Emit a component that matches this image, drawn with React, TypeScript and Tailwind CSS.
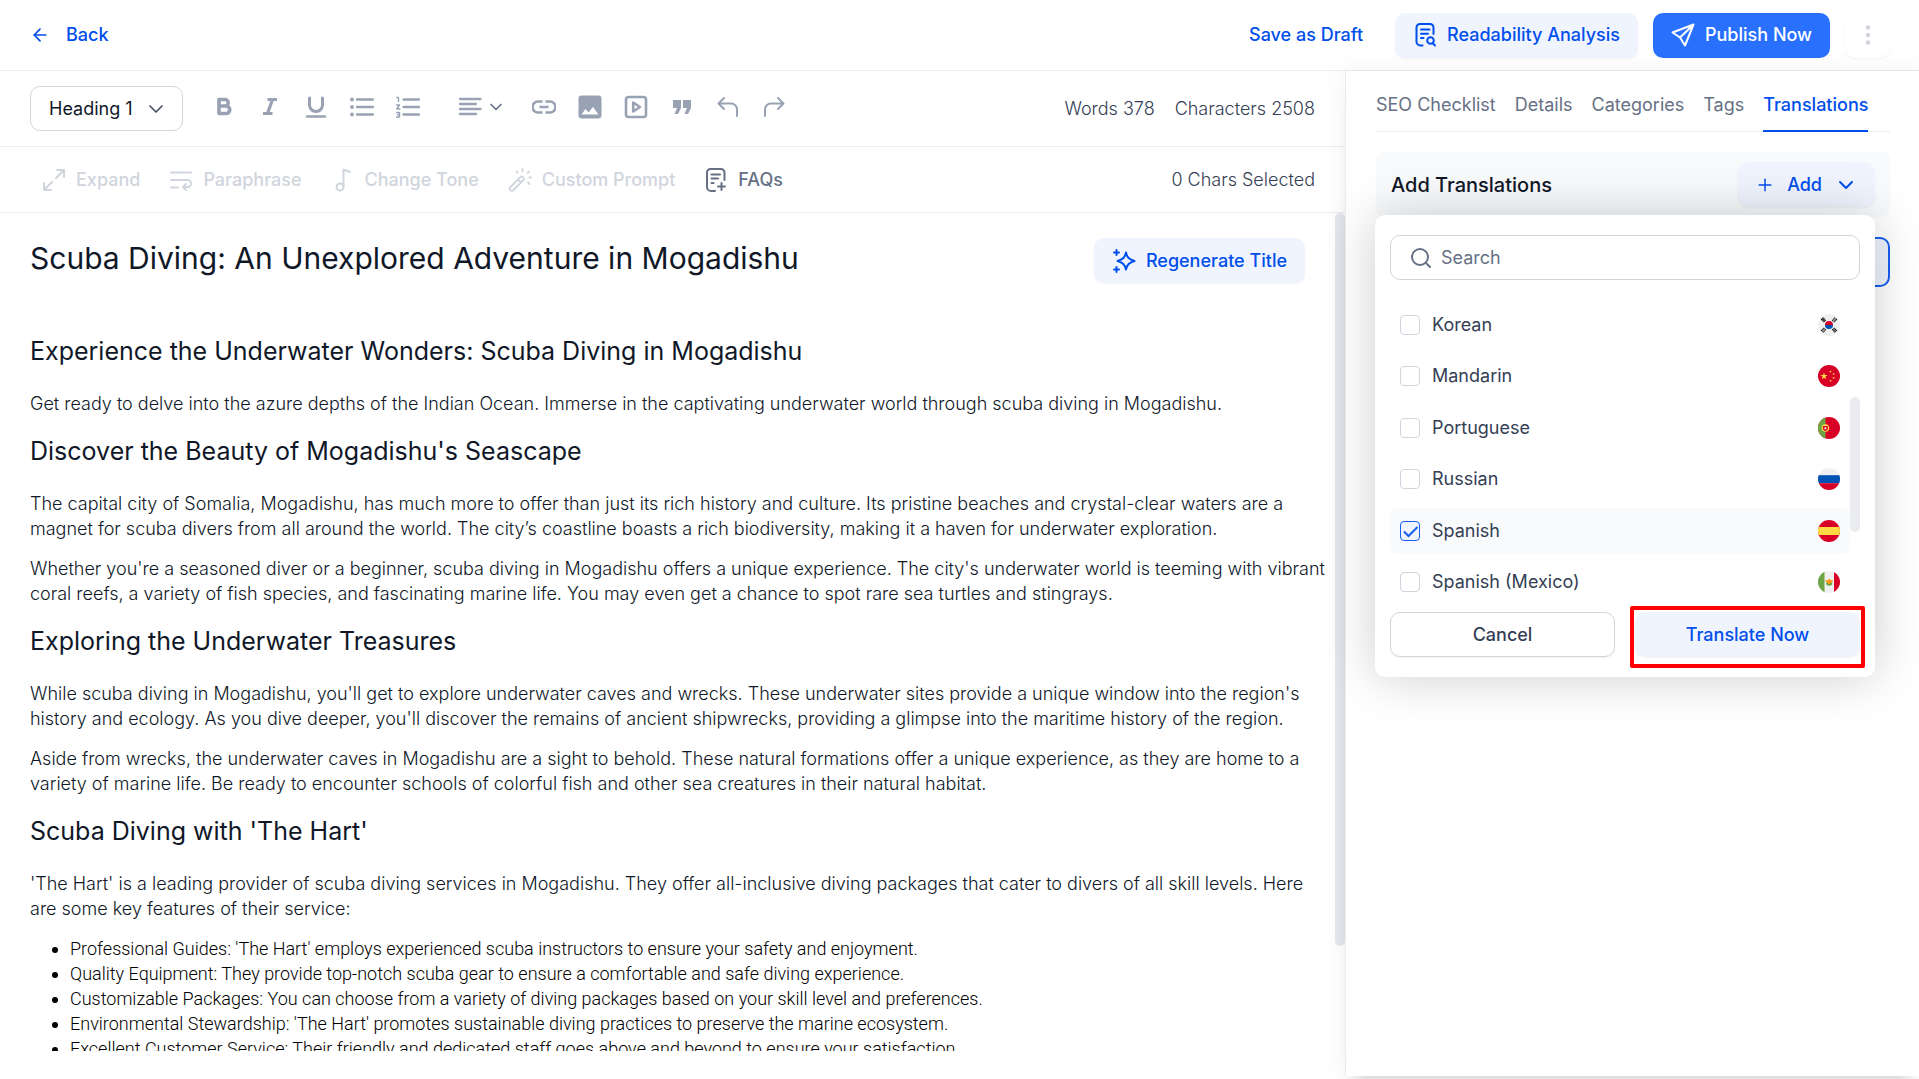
import { useState } from "react"
import type { ReactNode } from "react"
import { ArrowLeft, ChevronDown, Plus, Search } from "lucide-react"

const article = [
    {
        heading: "Experience the Underwater Wonders: Scuba Diving in Mogadishu",
        paragraphs: [
            "Get ready to delve into the azure depths of the Indian Ocean. Immerse in the captivating underwater world through scuba diving in Mogadishu.",
        ],
    },
    {
        heading: "Discover the Beauty of Mogadishu's Seascape",
        paragraphs: [
            "The capital city of Somalia, Mogadishu, has much more to offer than just its rich history and culture. Its pristine beaches and crystal-clear waters are a magnet for scuba divers from all around the world. The city’s coastline boasts a rich biodiversity, making it a haven for underwater exploration.",
            "Whether you're a seasoned diver or a beginner, scuba diving in Mogadishu offers a unique experience. The city's underwater world is teeming with vibrant coral reefs, a variety of fish species, and fascinating marine life. You may even get a chance to spot rare sea turtles and stingrays.",
        ],
    },
    {
        heading: "Exploring the Underwater Treasures",
        paragraphs: [
            "While scuba diving in Mogadishu, you'll get to explore underwater caves and wrecks. These underwater sites provide a unique window into the region's history and ecology. As you dive deeper, you'll discover the remains of ancient shipwrecks, providing a glimpse into the maritime history of the region.",
            "Aside from wrecks, the underwater caves in Mogadishu are a sight to behold. These natural formations offer a unique experience, as they are home to a variety of marine life. Be ready to encounter schools of colorful fish and other sea creatures in their natural habitat.",
        ],
    },
    {
        heading: "Scuba Diving with 'The Hart'",
        paragraphs: [
            "'The Hart' is a leading provider of scuba diving services in Mogadishu. They offer all-inclusive diving packages that cater to divers of all skill levels. Here are some key features of their service:",
        ],
    },
]

const features = [
    "Professional Guides: 'The Hart' employs experienced scuba instructors to ensure your safety and enjoyment.",
    "Quality Equipment: They provide top-notch scuba gear to ensure a comfortable and safe diving experience.",
    "Customizable Packages: You can choose from a variety of diving packages based on your skill level and preferences.",
    "Environmental Stewardship: 'The Hart' promotes sustainable diving practices to preserve the marine ecosystem.",
    "Excellent Customer Service: Their friendly and dedicated staff goes above and beyond to ensure your satisfaction.",
]

const languages = ["Korean", "Mandarin", "Portuguese", "Russian", "Spanish", "Spanish (Mexico)"]

const tabs = ["SEO Checklist", "Details", "Categories", "Tags", "Translations"]

const STAR = "M0-1 .22-.31H.95L.36.12.59.81 0 .38-.59.81-.36.12-.95-.31H-.22Z"

function Flag({ name }: { name: string }) {
    const id = "flag-" + name.replace(/\W/g, "")
    return (
        <svg viewBox="0 0 22 22" className="size-[22px] shrink-0" aria-hidden="true">
            <clipPath id={id}>
                <circle cx="11" cy="11" r="11" />
            </clipPath>
            <g clipPath={`url(#${id})`}>
                {name === "Korean" && (
                    <>
                        <rect width="22" height="22" fill="#f0f0f0" />
                        <path d="M7 11a4 4 0 0 1 8 0Z" fill="#d80027" />
                        <path d="M7 11a4 4 0 0 0 8 0Z" fill="#0052b4" />
                        <g stroke="#000" strokeWidth="1.1">
                            <path d="M3.200 6 5.600 3.600M4.300 7.100 6.700 4.700M5.400 8.200 7.800 5.800" />
                            <path d="M18.800 6 16.400 3.600M17.700 7.100 15.300 4.700M16.600 8.200 14.200 5.800" strokeDasharray="1.400 .6" />
                            <path d="M3.200 16 5.600 18.400M4.300 14.900 6.700 17.300M5.400 13.800 7.800 16.200" strokeDasharray="1.400 .6" />
                            <path d="M18.800 16 16.400 18.400M17.700 14.900 15.300 17.300M16.600 13.800 14.200 16.200" strokeDasharray="1.600 .3" />
                        </g>
                    </>
                )}
                {name === "Mandarin" && (
                    <>
                        <rect width="22" height="22" fill="#d80027" />
                        <g fill="#ffda44">
                            <path d={STAR} transform="translate(6 11.3) scale(3.8)" />
                            <path d={STAR} transform="translate(12.5 6.5) scale(1.4)" />
                            <path d={STAR} transform="translate(15.6 9) scale(1.4)" />
                            <path d={STAR} transform="translate(15.6 13) scale(1.4)" />
                            <path d={STAR} transform="translate(12.5 15.8) scale(1.4)" />
                        </g>
                    </>
                )}
                {name === "Portuguese" && (
                    <>
                        <rect width="22" height="22" fill="#d80027" />
                        <rect width="7.5" height="22" fill="#6da544" />
                        <circle cx="7.4" cy="11" r="3.8" fill="#ffda44" />
                        <path d="M5 9h4.8v2.6a2.4 2.4 0 0 1-4.8 0Z" fill="#d80027" />
                        <path d="M6.5 10.3h1.8v1.3a.9.9 0 0 1-1.8 0Z" fill="#f0f0f0" />
                    </>
                )}
                {name === "Russian" && (
                    <>
                        <rect width="22" height="22" fill="#f0f0f0" />
                        <rect y="7.2" width="22" height="8" fill="#0052b4" />
                        <rect y="15.2" width="22" height="7" fill="#d80027" />
                    </>
                )}
                {name === "Spanish" && (
                    <>
                        <rect width="22" height="22" fill="#d80027" />
                        <rect y="7" width="22" height="8" fill="#ffda44" />
                    </>
                )}
                {name === "Spanish (Mexico)" && (
                    <>
                        <rect width="22" height="22" fill="#f0f0f0" />
                        <rect width="6.5" height="22" fill="#6da544" />
                        <rect x="16" width="6" height="22" fill="#d80027" />
                        <path d="M8 11.5a3.2 3.2 0 0 0 6.4 0Z" fill="#6da544" />
                        <path d="M7.3 9.2h2.2L11.2 7.8l1.7 1.4h2.2c0 1.6-1 2-1.8 2.2l-2.1 1.8-2.1-1.8c-.8-.2-1.8-.6-1.8-2.2Z" fill="#ff9811" />
                    </>
                )}
            </g>
        </svg>
    )
}

function Icon({ children }: { children: ReactNode }) {
    return (
        <svg
            viewBox="0 0 24 24"
            fill="none"
            stroke="currentColor"
            strokeWidth="2"
            strokeLinecap="round"
            strokeLinejoin="round"
            className="size-6 shrink-0"
            aria-hidden="true"
        >
            {children}
        </svg>
    )
}

function ToolButton({ label, children }: { label: string; children: ReactNode }) {
    return (
        <button type="button" aria-label={label} className="flex size-6 shrink-0 items-center justify-center">
            <Icon>{children}</Icon>
        </button>
    )
}

function AiButton({ label, disabled, children }: { label: string; disabled?: boolean; children: ReactNode }) {
    return (
        <button
            type="button"
            disabled={disabled}
            className="flex shrink-0 items-center gap-2.5 font-medium text-[#667085] disabled:text-[#d0d5dd]"
        >
            <Icon>{children}</Icon>
            {label}
        </button>
    )
}

function Header() {
    return (
        <header className="flex h-[71px] shrink-0 items-center justify-between border-b border-[#eaecf0] pr-[29px] pl-[30px] font-medium">
            <a href="#" className="flex items-center gap-4 text-[#004eeb]">
                <ArrowLeft className="size-5" strokeWidth={2} />
                Back
            </a>
            <div className="flex items-center">
                <button type="button" className="mr-8 text-[#004eeb]">
                    Save as Draft
                </button>
                <button
                    type="button"
                    className="mr-[15px] flex h-[45px] items-center gap-2.5 rounded-[10px] bg-[#eff4ff] px-[18px] text-[#004eeb] shadow-xs"
                >
                    <Icon>
                        <path d="M9.500 22.500H7.500A4 4 0 0 1 3.500 18.500V4.500A3.500 3.500 0 0 1 7 1h10a3.500 3.500 0 0 1 3.500 3.500V11M8 6.500h8.500M8 10.800h7M8 15h2.500" />
                        <circle cx="17.500" cy="17.500" r="3.300" />
                        <path d="m20 20.500 2 2" />
                    </Icon>
                    Readability Analysis
                </button>
                <button
                    type="button"
                    className="mr-[15px] flex h-[45px] items-center gap-2.5 rounded-[10px] bg-[#2970ff] px-[18px] text-white"
                >
                    <Icon>
                        <path d="M22.500 1.500 1.500 9.500 9 14.500l5 8ZM22.500 1.500 9 14.500" />
                    </Icon>
                    Publish Now
                </button>
                <button
                    type="button"
                    aria-label="More options"
                    className="flex size-[45px] items-center justify-center rounded-[10px] text-[#d0d5dd] shadow-xs"
                >
                    <svg viewBox="0 0 24 24" fill="currentColor" className="size-6" aria-hidden="true">
                        <circle cx="12" cy="4.500" r="2.200" />
                        <circle cx="12" cy="12" r="2.200" />
                        <circle cx="12" cy="19.500" r="2.200" />
                    </svg>
                </button>
            </div>
        </header>
    )
}

function FormatToolbar() {
    return (
        <div className="flex h-[76px] shrink-0 items-center justify-between border-b border-[#eaecf0] px-[30px]">
            <div className="flex items-center">
                <button
                    type="button"
                    aria-haspopup="listbox"
                    className="mr-[29px] flex h-[45px] w-[153px] items-center justify-between rounded-[10px] border border-[#d0d5dd] pr-3.5 pl-[18px] text-[#101828]"
                >
                    Heading 1
                    <ChevronDown className="size-6 text-[#475467]" strokeWidth={1.75} />
                </button>
                <div className="flex items-center gap-[22px] pb-1 text-[#98a2b3]">
                    <ToolButton label="Bold">
                        <path d="M7 4.500h6a3 3 0 0 1 0 6.500H7ZM7 11h7a3.500 3.500 0 0 1 0 7.500H7Z" strokeWidth="3.600" />
                    </ToolButton>
                    <ToolButton label="Italic">
                        <path d="M9.500 4.500h9.500M5 18.500h9.500M14.500 4.500l-5 14" strokeWidth="3.200" strokeLinecap="butt" />
                    </ToolButton>
                    <ToolButton label="Underline">
                        <path d="M5.500 3v7a6.500 6.500 0 0 0 13 0V3" strokeWidth="3" />
                        <path d="M3 21.500h18" strokeWidth="2.400" />
                    </ToolButton>
                    <ToolButton label="Bullet list">
                        <path d="M7 4.500h16M7 12h16M7 19.500h16" strokeWidth="2.300" />
                        <path d="M2 4.500h.01M2 12h.01M2 19.500h.01" strokeWidth="3.800" />
                    </ToolButton>
                    <ToolButton label="Numbered list">
                        <path d="M7.500 4.500H23M7.500 12H23M7.500 19.500H23" strokeWidth="2.300" />
                        <path d="M.800 2.500h1.700V6.500M.600 10H3.500L.800 14H3.800M.600 17.500h2.900V22H.600M1.500 19.700h2" strokeWidth="1.400" />
                    </ToolButton>
                    <button type="button" aria-label="Text align" className="mr-1 ml-4 flex items-center gap-1">
                        <Icon>
                            <path d="M2 4h20.500M2 9h16M2 14h20.500M2 19h16" strokeWidth="2.300" />
                        </Icon>
                        <ChevronDown className="size-5 text-[#667085]" strokeWidth={2} />
                    </button>
                    <ToolButton label="Link">
                        <path d="M10.500 6.500H6a5.500 5.500 0 0 0 0 11h4.500M13.500 6.500H18a5.500 5.500 0 0 1 0 11h-4.500M7.500 12h9" strokeWidth="2.600" strokeLinecap="butt" />
                    </ToolButton>
                    <ToolButton label="Image">
                        <rect x=".500" y=".500" width="23" height="23" rx="3" fill="currentColor" stroke="none" />
                        <path d="m3.500 19.500 4-5.500 3 3.500 4.500-5.500 5.500 7.500Z" fill="#fff" stroke="none" />
                    </ToolButton>
                    <ToolButton label="Video">
                        <rect x="2" y="2" width="20" height="20" rx="2.500" strokeWidth="2.600" />
                        <path d="M9.200 7.500v9l6.800-4.500Z" strokeWidth="2.600" />
                    </ToolButton>
                    <ToolButton label="Quote">
                        <path d="M3 5h8v8l-3 6H4.500L7 13H3ZM13 5h8v8l-3 6h-3.500L17 13h-4Z" fill="currentColor" stroke="none" />
                    </ToolButton>
                    <ToolButton label="Undo">
                        <path d="M8 3 2.500 8.500 8 14M3 8.500h12a6 6 0 0 1 6 6v6.500" />
                    </ToolButton>
                    <ToolButton label="Redo">
                        <path d="M16 3 21.500 8.500 16 14M21 8.500H9a6 6 0 0 0-6 6v6.500" />
                    </ToolButton>
                </div>
            </div>
            <div className="flex gap-5 font-light text-[#344054]">
                <span>Words 378</span>
                <span>Characters 2508</span>
            </div>
        </div>
    )
}

function AiToolbar() {
    return (
        <div className="flex h-[66px] shrink-0 items-center justify-between border-b border-[#eaecf0] pr-[30px] pl-[42px]">
            <div className="flex items-center gap-[29px]">
                <AiButton label="Expand" disabled>
                    <path d="M15 2h7v7M22 2l-8 8M9 22H2v-7M2 22l8-8" />
                </AiButton>
                <AiButton label="Paraphrase" disabled>
                    <path d="M2 4.500h20M2 12h16.500a3.500 3.500 0 0 1 0 7H14M2 19.500h7M17 16l-3 3 3 3" />
                </AiButton>
                <AiButton label="Change Tone" disabled>
                    <circle cx="9" cy="19" r="3.500" />
                    <path d="M12.500 19V1.500L19 4" />
                </AiButton>
                <AiButton label="Custom Prompt" disabled>
                    <path d="M2 19.500 12.500 9a1.500 1.500 0 0 1 2.200 0l.800.800a1.500 1.500 0 0 1 0 2.200L5 22.500a1.500 1.500 0 0 1-2.200 0l-.800-.800a1.500 1.500 0 0 1 0-2.200ZM10 11.500l3 3M14.500 1v2M8.500 3.500l1.300 1.300M21 3.500l-1.300 1.300M21.500 9.500H23M20 14.500l1.500 1.500" strokeWidth="1.800" />
                </AiButton>
                <AiButton label="FAQs">
                    <path d="M11 23H7a4 4 0 0 1-4-4V4.500A3.500 3.500 0 0 1 6.500 1h10.500A3.500 3.500 0 0 1 20.500 4.500V12M7.500 6.500h8.500M7.500 10.500h6.500M7.500 15h2M17.500 15v7M14 18.500h7" />
                </AiButton>
            </div>
            <span className="font-light text-[#344054]">0 Chars Selected</span>
        </div>
    )
}

function Article() {
    return (
        <div className="relative min-h-0 flex-1">
            <article className="h-full overflow-hidden pt-[25px] pr-[18px] pl-[30px]">
                <div className="mb-[53px] flex items-start justify-between pr-[22px]">
                    <h1 className="text-3xl leading-10 text-[#101828]">
                        Scuba Diving: An Unexplored Adventure in Mogadishu
                    </h1>
                    <button
                        type="button"
                        className="-mb-[5px] flex h-[45px] items-center gap-2.5 rounded-[10px] bg-[#eff4ff] px-[18px] font-medium text-[#004eeb] shadow-xs"
                    >
                        <Icon>
                            <path d="M14 3.500c1.200 5 3 7 8.500 8.500-5.500 1.500-7.300 3.500-8.500 8.500-1.200-5-3-7-8.500-8.500 5.500-1.500 7.300-3.500 8.500-8.500ZM4.500 1v5M2 3.500h5M4.500 18v5M2 20.500h5" />
                        </Icon>
                        Regenerate Title
                    </button>
                </div>
                {article.map((section) => (
                    <section key={section.heading}>
                        <h2 className="mb-5 text-[25px] leading-10 text-[#101828]">{section.heading}</h2>
                        {section.paragraphs.map((text) => (
                            <p key={text} className="mb-[15px] leading-[25px] font-light text-[#101828]">
                                {text}
                            </p>
                        ))}
                    </section>
                ))}
                <ul className="list-disc pl-10 font-[Roboto,sans-serif] leading-[25px] font-light text-black">
                    {features.map((text) => (
                        <li key={text}>{text}</li>
                    ))}
                </ul>
            </article>
            <div className="absolute top-0 right-0 h-[87.5%] w-2.5 rounded-full bg-[#e5e7ec]" />
        </div>
    )
}

function TranslationMenu() {
    const [selected, setSelected] = useState(["Spanish"])

    const toggle = (name: string) => {
        setSelected((prev) => (prev.includes(name) ? prev.filter((item) => item !== name) : [...prev, name]))
    }

    return (
        <div className="absolute top-[53px] right-0 z-10 w-[500px] rounded-[10px] bg-white px-[15px] py-5 shadow-[0_0_50px_rgba(0,0,0,0.2)]">
            <label className="flex h-[45px] items-center gap-2 rounded-[10px] border border-[#d0d5dd] px-[18px]">
                <Search className="size-6 text-[#667085]" strokeWidth={2} />
                <input
                    type="text"
                    placeholder="Search"
                    aria-label="Search"
                    className="min-w-0 flex-1 outline-none placeholder:text-[#667085]"
                />
            </label>
            <div className="relative mt-[22px] h-[303px]">
                <ul className="flex h-full flex-col justify-between overflow-hidden pr-2.5">
                    {languages.map((name) => {
                        const checked = selected.includes(name)
                        return (
                            <li key={name}>
                                <label
                                    className={`flex h-[46px] items-center rounded-lg px-2.5 text-[#344054] ${checked ? "bg-[#f9fafb]" : ""}`}
                                >
                                    <span className="relative flex">
                                        <input
                                            type="checkbox"
                                            checked={checked}
                                            onChange={() => toggle(name)}
                                            className="size-5 appearance-none rounded border border-[#d0d5dd] bg-white checked:border-[#155eef] checked:bg-[#eff4ff]"
                                        />
                                        {checked && (
                                            <svg
                                                viewBox="0 0 20 20"
                                                fill="none"
                                                stroke="#155eef"
                                                strokeWidth="2"
                                                className="pointer-events-none absolute inset-0 size-5"
                                                aria-hidden="true"
                                            >
                                                <path d="m4 10.500 4.500 4.500 9-9" />
                                            </svg>
                                        )}
                                    </span>
                                    <span className="ml-3 flex-1">{name}</span>
                                    <Flag name={name} />
                                </label>
                            </li>
                        )
                    })}
                </ul>
                <div className="absolute top-[95px] right-0 h-[135px] w-2.5 rounded-full bg-[#eaecf0]" />
            </div>
            <div className="mt-[7px] grid grid-cols-2 gap-5 font-medium">
                <button type="button" className="h-[45px] rounded-[10px] border border-[#d0d5dd] text-[#344054] shadow-xs">
                    Cancel
                </button>
                <button
                    type="button"
                    className="relative h-[45px] rounded-[10px] bg-[#eff4ff] text-[#004eeb] shadow-xs"
                >
                    Translate Now
                    <span className="absolute -inset-x-[5px] -top-[6px] -bottom-[11px] rounded-xs border-4 border-[#ff0000]" />
                </button>
            </div>
        </div>
    )
}

function Sidebar() {
    return (
        <aside className="relative mb-[3px] w-[574px] shrink-0 border-l border-[#eaecf0] bg-white pr-[29px] pl-[30px] shadow-[0_0_25px_rgba(16,24,40,0.06),0_15px_15px_-10px_rgba(0,0,0,0.15)]">
            <nav className="flex h-[61px] items-end gap-[19px] border-b border-[#eaecf0]">
                {tabs.map((tab) => (
                    <a
                        key={tab}
                        href="#"
                        className={
                            tab === "Translations"
                                ? "-mb-px shrink-0 border-b-2 border-[#004eeb] pb-[11px] font-medium text-[#004eeb]"
                                : "shrink-0 pb-3 text-[#667085]"
                        }
                    >
                        {tab}
                    </a>
                ))}
            </nav>
            <div className="mt-5 flex h-[65px] items-center justify-between rounded-lg bg-[#f9fafb] px-[15px]">
                <h3 className="text-xl font-medium text-[#101828]">Add Translations</h3>
                <div className="relative">
                    <button
                        type="button"
                        className="flex h-[45px] items-center gap-3 rounded-[10px] bg-[#eff4ff] px-[17px] font-medium text-[#004eeb] shadow-xs"
                    >
                        <Plus className="size-5" strokeWidth={1.75} />
                        Add
                        <ChevronDown className="size-6" strokeWidth={2} />
                    </button>
                    <TranslationMenu />
                </div>
            </div>
            <div className="mt-5 h-[50px] rounded-[10px] border-2 border-[#155eef] bg-[#eff4ff]" />
        </aside>
    )
}

export default function App() {
    return (
        <div className="flex h-screen flex-col overflow-hidden bg-white font-[Inter,sans-serif] text-lg">
            <Header />
            <div className="flex min-h-0 flex-1">
                <main className="flex min-w-0 flex-1 flex-col pb-7">
                    <FormatToolbar />
                    <AiToolbar />
                    <Article />
                </main>
                <Sidebar />
            </div>
        </div>
    )
}
